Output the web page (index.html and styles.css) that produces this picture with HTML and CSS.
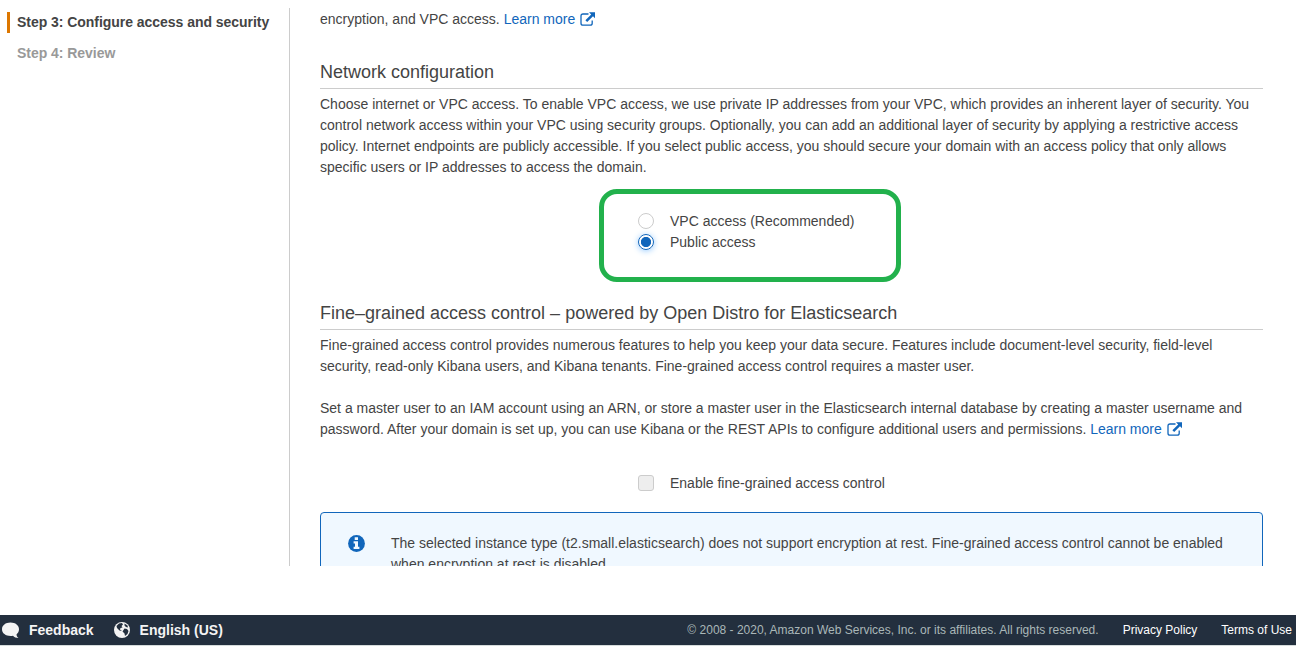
FILE: index.html
```html
<!DOCTYPE html>
<html lang="en">
<head>
<meta charset="utf-8">
<title>Configure access and security</title>
<link rel="stylesheet" href="styles.css">
</head>
<body>
<svg class="defs" width="0" height="0">
  <symbol id="external" viewBox="0 0 16 14">
    <path d="M8.5 2H3Q1 2 1 4v7.200q0 2 2 2h7.200q2 0 2-2V8.600" fill="none" stroke="currentColor" stroke-width="1.300"/>
    <path d="M9 0.300H15v6l-2-2-5.800 5.700-1.800-1.800 5.800-5.700z" fill="currentColor"/>
  </symbol>
</svg>
<div class="viewport">
  <nav class="steps">
    <div class="step current">Step 3: Configure access and security</div>
    <div class="step">Step 4: Review</div>
  </nav>
  <main class="content">
    <p class="intro">encryption, and VPC access. <a class="link">Learn more <svg class="ext"><use href="#external"/></svg></a></p>
    <h2 class="heading">Network configuration</h2>
    <p class="text">Choose internet or VPC access. To enable VPC access, we use private IP addresses from your VPC, which provides an inherent layer of security. You<br>control network access within your VPC using security groups. Optionally, you can add an additional layer of security by applying a restrictive access<br>policy. Internet endpoints are publicly accessible. If you select public access, you should secure your domain with an access policy that only allows<br>specific users or IP addresses to access the domain.</p>
    <div class="highlight">
      <div class="option"><span class="radio"></span>VPC access (Recommended)</div>
      <div class="option"><span class="radio checked"></span>Public access</div>
    </div>
    <h2 class="heading">Fine–grained access control – powered by Open Distro for Elasticsearch</h2>
    <p class="text">Fine-grained access control provides numerous features to help you keep your data secure. Features include document-level security, field-level<br>security, read-only Kibana users, and Kibana tenants. Fine-grained access control requires a master user.</p>
    <p class="text second">Set a master user to an IAM account using an ARN, or store a master user in the Elasticsearch internal database by creating a master username and<br>password. After your domain is set up, you can use Kibana or the REST APIs to configure additional users and permissions. <a class="link">Learn more <svg class="ext"><use href="#external"/></svg></a></p>
    <div class="option enable"><span class="checkbox"></span>Enable fine-grained access control</div>
    <div class="notice">
      <svg class="info" viewBox="0 0 17 17"><circle cx="8.5" cy="8.5" r="8.4" fill="#1166bb"/><path d="M6.700 2.300h3.300v2.800H6.700zM5.600 6.200H10v5.600h1.400v2.200H5.600v-2.200H7V8.400H5.600z" fill="#f0f8ff"/></svg>
      <p class="notice-text">The selected instance type (t2.small.elasticsearch) does not support encryption at rest. Fine-grained access control cannot be enabled<br>when encryption at rest is disabled.</p>
    </div>
  </main>
</div>
<footer class="footer">
  <svg class="bubble" viewBox="0 0 18 17"><path d="M8.500.5c5 0 8.500 2.800 8.500 6.800 0 2.200-1 3.900-2.500 5.100.1 1.500.8 2.700 2 3.600-2.400 0-4.300-.8-5.500-2.200C4.800 14.700 0 12 0 7.300 0 3.300 3.500.5 8.500.5z" fill="#f4f4f4"/></svg>
  <span class="foot-main">Feedback</span>
  <svg class="globe" viewBox="0 0 16 16"><circle cx="8" cy="8" r="8" fill="#f4f4f4"/><path d="M5 1.500l3-.5 1 1.500L7.500 4l1 1.500-2 .5-.5 1.500L8 9 5.500 8.500 3 6 2.500 4zM10.500 1.500l3 2 .5 2-2-.5-1.500-1.500zM10.500 6.500l2.500.5 1.500 2-1 3-2.500 2-.5-2.500L8.500 9.500z" fill="#232f3e"/></svg>
  <span class="foot-main">English (US)</span>
  <span class="copyright">© 2008 - 2020, Amazon Web Services, Inc. or its affiliates. All rights reserved.</span>
  <span class="foot-link">Privacy Policy</span>
  <span class="foot-link">Terms of Use</span>
</footer>
</body>
</html>
```
FILE: styles.css
```css
body {
  margin: 0;
  height: 647px;
  overflow: hidden;
  background: #fff;
  color: #444;
  font: 14px/21px "Liberation Sans", Arial, sans-serif;
}
p { margin: 0; white-space: nowrap; }
.defs { display: block; }
.viewport {
  display: flex;
  box-sizing: border-box;
  height: 566px;
  padding-top: 8px;
  overflow: hidden;
}
.steps {
  box-sizing: border-box;
  width: 290px;
  flex: none;
  padding: 4px 0 0 7px;
  border-right: 1px solid #ccc;
}
.step {
  margin-bottom: 10px;
  padding-left: 10px;
  color: #999;
  font-weight: bold;
  letter-spacing: -0.04px;
  white-space: nowrap;
}
.step.current {
  padding-left: 7px;
  border-left: 3px solid #dd7700;
  color: #444;
}
.content { width: 943px; margin-left: 30px; }
.intro { padding-top: 1px; }
.link { color: #1166bb; }
.ext { width: 16px; height: 14px; margin-left: 1px; vertical-align: -2px; }
.heading {
  box-sizing: border-box;
  height: 28px;
  margin: 31px 0 0;
  border-bottom: 1px solid #ccc;
  font-size: 18px;
  font-weight: normal;
  line-height: 22px;
  white-space: nowrap;
}
.text { margin-top: 5px; }
.text.second { margin-top: 21px; }
.highlight {
  box-sizing: border-box;
  width: 302px;
  height: 93px;
  margin: 11px 0 0 279px;
  padding: 17px 0 0 34px;
  border: 5px solid #22b14c;
  border-radius: 18px;
}
.heading:nth-of-type(2) { margin-top: 20px; }
.option { display: flex; align-items: center; gap: 16px; height: 21px; white-space: nowrap; }
.radio {
  box-sizing: border-box;
  width: 16px;
  height: 16px;
  margin-bottom: 2px;
  border: 1px solid #ccc;
  border-radius: 50%;
}
.radio.checked {
  border-color: #1166bb;
  background: radial-gradient(circle, #1166bb 4.700px, #fff 5.500px);
  box-shadow: 0 1px 6px #99ccff;
}
.enable { margin: 33px 0 0 318px; }
.checkbox {
  box-sizing: border-box;
  width: 16px;
  height: 16px;
  margin-bottom: 2px;
  border: 1px solid #ccc;
  border-radius: 3px;
  background: #eee;
}
.notice {
  display: flex;
  box-sizing: border-box;
  height: 90px;
  margin-top: 18px;
  padding: 20px 0 0 27px;
  border: 1px solid #1166bb;
  border-radius: 4px;
  background: #f0f8ff;
}
.info { width: 17px; height: 17px; margin: 2px 26px 0 0; }
.footer {
  display: flex;
  align-items: center;
  box-sizing: border-box;
  height: 31px;
  margin-top: 49px;
  padding: 0 4px 0 2px;
  border-bottom: 1px solid #d5dbdb;
  background: #232f3e;
  font-size: 12px;
  white-space: nowrap;
}
.bubble { width: 18px; height: 17px; margin-right: 9px; }
.globe { width: 16px; height: 16px; margin: 0 10px 0 20px; }
.foot-main { color: #f4f4f4; font-size: 14px; font-weight: bold; }
.copyright { margin-left: auto; color: #aab7b8; }
.foot-link { margin-left: 24px; color: #fff; }
```
